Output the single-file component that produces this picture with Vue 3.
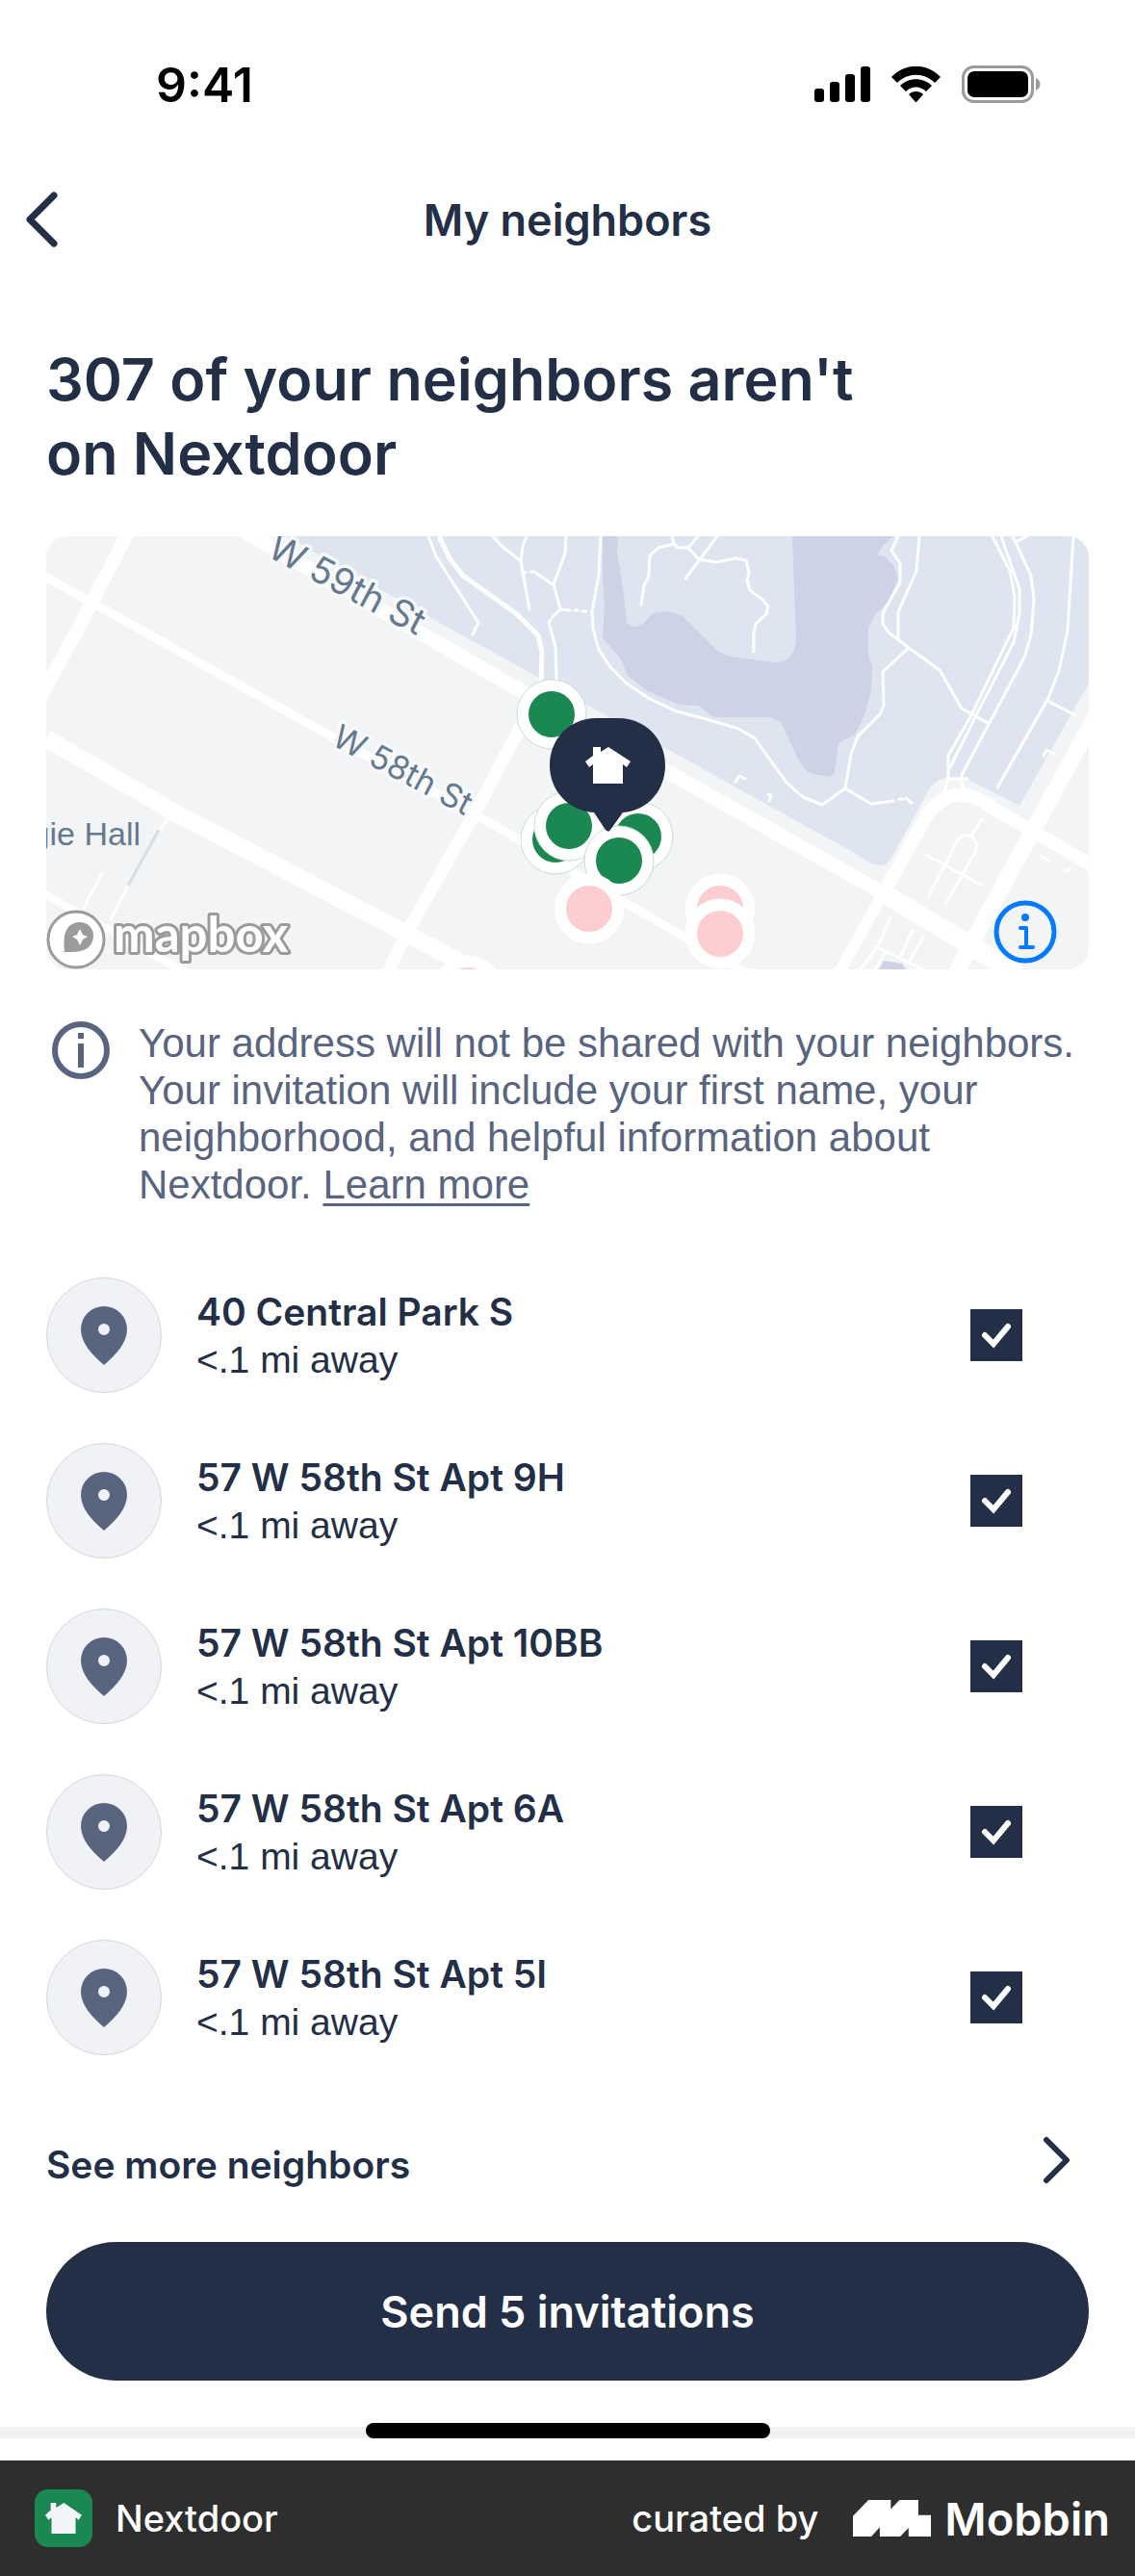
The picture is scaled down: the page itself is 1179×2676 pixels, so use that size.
<script setup>
import { computed, ref } from 'vue'

const neighbors = ref([
  { id: 1, address: '40 Central Park S', distance: '<.1 mi away', selected: true },
  { id: 2, address: '57 W 58th St Apt 9H', distance: '<.1 mi away', selected: true },
  { id: 3, address: '57 W 58th St Apt 10BB', distance: '<.1 mi away', selected: true },
  { id: 4, address: '57 W 58th St Apt 6A', distance: '<.1 mi away', selected: true },
  { id: 5, address: '57 W 58th St Apt 5I', distance: '<.1 mi away', selected: true },
])

const selectedCount = computed(() => neighbors.value.filter((n) => n.selected).length)

// Park footpaths, in map units
const footpaths = [
  '576,0 574,40 567,78 568,96 574,118 586,136 603,153 627,169 655,182 686,190 719,200 736,210 769,256 786,271 806,279 830,262 857,278 880,275',
  '886,273 890,273',
  '893,272 899,277',
  '830,262 836,226 843,208 866,185 870,176 869,141 896,116',
  '885,0 878,15 887,28 887,48 869,80 869,91 875,100 896,116 928,139 951,179 978,194',
  '907,0 904,36 885,79 885,108',
  '650,0 652,8 636,12 627,20 626,41 621,51 618,71',
  '652,8 656,12 667,12 677,0',
  '667,12 678,24 696,27 716,23 727,25 730,38 728,46 731,56 743,65 750,73 748,81 737,91 735,100 735,120',
  '697,0 664,44',
  '983,0 1001,36 1006,63 1005,95 961,186 937,228 937,251 931,273',
  '992,0 1011,55 1011,80 1005,110 964,190 939,240',
  '1004,0 1023,41 1026,65 1023,103 1016,126 951,248 952,260 955,268',
  '1007,6 1019,0',
  '1067,0 1061,98 1052,140 1040,170 988,261',
  '1040,171 1069,186',
  '1036,228 1039,222 1047,226',
  '716,255 720,249 726,252',
  '750,268 753,269 751,275',
  '936,252 957,252',
  '397,0 405,21 449,90 443,102',
  '464,0 473,10 493,26 496,43 502,76',
  '499,0 495,11 493,26',
  '540,0 539,18 527,50 534,76',
  '532,78 526,84',
  '524,87 522,90 529,115 530,150',
  '495,38 498,38',
  '503,37 507,37 527,51',
  '534,76 544,77',
  '549,77 552,77',
  '557,78 560,78',
]

const alleys = [
  '58,350 39,386',
  '131,290 117,305',
  '85,363 67,398',
  '877,396 864,426 846,450',
  '861,426 911,450',
  '900,410 888,435',
  '911,416 897,441',
  '871,433 861,450',
  '914,331 971,362',
  '917,373 939,331 946,316 952,311 961,311 967,320 965,328 934,382',
  '961,311 972,294',
  '1033,332 1041,337',
  '1057,347 1061,348 1063,345',
]

const markers = [
  { x: 525, y: 185, tone: 'joined' },
  { x: 529, y: 315, tone: 'joined' },
  { x: 543, y: 301, tone: 'joined' },
  { x: 615, y: 312, tone: 'joined' },
  { x: 595, y: 337, tone: 'joined' },
  { x: 564, y: 387, tone: 'invited' },
  { x: 700, y: 387, tone: 'invited' },
  { x: 700, y: 413, tone: 'invited' },
  { x: 438, y: 472, tone: 'invited' },
]
</script>

<template>
  <div class="page">
    <div class="status">
      <span class="clock">9:41</span>
      <div class="status-icons">
        <svg width="58" height="38" viewBox="0 0 58 38">
          <rect x="0" y="23" width="10" height="14" rx="3" />
          <rect x="16" y="16" width="10" height="21" rx="3" />
          <rect x="32" y="8" width="10" height="29" rx="3" />
          <rect x="48" y="0" width="10" height="37" rx="3" />
        </svg>
        <svg width="51" height="38" viewBox="0 0 51 38">
          <path d="M0 11 C14 -4 37 -4 51 11 L45 17 C34 6 17 6 6 17 Z" />
          <path d="M9 20 C18 11 33 11 42 20 L36 26 C30 20 21 20 15 26 Z" />
          <path d="M18 29 C22 25 29 25 33 29 L26 37 Q25.500 37.500 25 37 Z" />
        </svg>
        <svg width="82" height="40" viewBox="0 0 82 40">
          <rect x="1.500" y="1.500" width="72" height="36" rx="11" fill="none" stroke="#9a9a9a" stroke-width="3" />
          <rect x="6" y="6" width="63" height="27" rx="7" />
          <path d="M77 13 C83 16 83 23 77 26 Z" fill="#9a9a9a" />
        </svg>
      </div>
    </div>

    <header class="topbar">
      <button class="back" type="button" aria-label="Back">
        <svg width="34" height="58" viewBox="0 0 34 58">
          <path d="M30 4 L5 29 L30 54" fill="none" stroke="#232f46" stroke-width="7" stroke-linecap="round" stroke-linejoin="round" />
        </svg>
      </button>
      <div class="topbar-title">My neighbors</div>
    </header>

    <main class="content">
      <h1>307 of your neighbors aren't<br />on Nextdoor</h1>

      <div class="map">
        <svg class="map-canvas" viewBox="0 0 1083 450" role="img" aria-label="Map of nearby neighbors">
          <rect width="1083" height="450" fill="#f2f4f5" />
          <path fill="#dfe5f0" d="M249 0 L396 83 L510 146 L561 175 L643 220 L832 325 L855 339 Q870 346 877 336 L919 260 Q928 250 938 251 L957 253 L1011 280 L1083 153 V0 Z" />
          <path
            fill="#cdd2e4"
            fill-rule="evenodd"
            d="M578 0 L578 43 L580 73 L578 106 L596 126 L605 146 L625 161 L657 175 L678 176 L693 188 L753 188 L763 193 L782 233 Q790 247 798 247 L813 250 Q819 248 819 243 L823 215 L840 206 L850 186 L857 160 L858 136 L854 123 L854 96 L861 81 L875 68 L885 43 L880 30 L871 21 L863 20 L868 11 L880 0 Z
               M594 0 L593 16 L600 60 L603 90 Q610 98 621 90 L630 80 Q646 76 661 83 L689 111 Q700 122 711 125 L757 131 Q775 132 779 110 L775 0 Z"
          />
          <path fill="#cdd2e4" d="M865 450 L870 441 L889 444 L893 450 Z" />

          <g fill="none" stroke="#fff" stroke-linejoin="round">
            <polyline points="0,210 135,288 371,411 470,464" stroke-width="18" />
            <polyline points="-5,40 46,68 296,208 453,293 600,380 732,456" stroke-width="9" />
            <polyline points="200,-8 492,160 646,245 868,370" stroke-width="15" />
            <polyline points="868,370 957,423 1010,456" stroke-width="20" />
            <polyline points="87,-8 47,70 -6,168" stroke-width="14" />
            <polyline points="510,165 444,290 374,413 352,460" stroke-width="13" />
            <polyline points="-5,370 146,454" stroke-width="8" />
            <polyline points="1090,187 1025,306 961,423 940,464" stroke-width="17" />
            <path d="M868 373 L916 288 Q945 252 984 283 L1090 344" stroke-width="14" />
            <polyline points="870,370 820,460" stroke-width="12" />
            <polyline points="408,0 419,23 433,41 489,81 511,103 515,121 514,152" stroke-width="5" />
            <g stroke-width="3" stroke-linecap="round">
              <polyline v-for="p in footpaths" :key="p" :points="p" />
              <polyline v-for="p in alleys" :key="p" :points="p" />
            </g>
          </g>
          <path d="M117 305 L85 363" stroke="#dadddf" stroke-width="3" />

          <g class="street-names">
            <text transform="translate(228 20) rotate(28)" font-size="38">W 59th St</text>
            <text transform="translate(295 216) rotate(28)" font-size="34">W 58th St</text>
            <text class="place" x="98" y="321" font-size="34" text-anchor="end">gie Hall</text>
          </g>

          <g v-for="(m, i) in markers" :key="i">
            <circle :cx="m.x" :cy="m.y" r="36" fill="#fff" :stroke="m.tone === 'joined' ? '#c9ddd4' : '#fff'" stroke-width="1" />
            <circle :cx="m.x" :cy="m.y" r="24" :fill="m.tone === 'joined' ? '#1b8751' : '#fccdd1'" />
          </g>

          <path fill="#232f46" d="M572 189 H594 C623 189 643 211 643 238 C643 264 625 285 599 287 L586 305 Q584 308 581 305 L569 287 C542 285 523 264 523 238 C523 211 543 189 572 189 Z" />
          <path fill="#fff" d="M568 219 H576 V224 L584 219 L607 234 L603 240 L599 237 V257 H568 V237 L564 240 L560 234 L568 228 Z" />

          <circle cx="31" cy="419" r="29" fill="#fff" stroke="#9b9b9b" stroke-width="3" />
          <path fill="#9b9b9b" d="M19 432 C18 421 18 412 23 406 C29 400 39 399 45 405 C51 411 50 421 44 427 C38 432 29 432 19 432 Z" />
          <path fill="#fff" d="M35 408 L38 414 L43 416 L38 419 L35 425 L32 419 L27 416 L32 414 Z" />
          <text class="wordmark" x="70" y="432" font-size="51">mapbox</text>
        </svg>
        <button class="map-info" type="button" aria-label="About this map">
          <svg width="66" height="66" viewBox="0 0 66 66" fill="none" stroke="#047afe" stroke-linecap="round" stroke-linejoin="round">
            <circle cx="33" cy="33" r="30" stroke-width="5" />
            <circle cx="33" cy="18" r="4" fill="#047afe" stroke="none" />
            <path d="M28 29 H34 V49 M28 49 H41" stroke-width="4" />
          </svg>
        </button>
      </div>

      <section class="notice">
        <svg class="notice-icon" width="60" height="60" viewBox="0 0 60 60">
          <circle cx="30" cy="30" r="27" fill="none" stroke="#59657f" stroke-width="6" />
          <path d="M30 12 V18 M30 23 V48" stroke="#59657f" stroke-width="6" />
        </svg>
        <p>
          Your address will not be shared with your neighbors. Your invitation will include your first name, your
          neighborhood, and helpful information about Nextdoor. <a href="#">Learn more</a>
        </p>
      </section>

      <ul class="neighbors">
        <li v-for="n in neighbors" :key="n.id" class="neighbor">
          <span class="avatar">
            <svg width="48" height="61" viewBox="0 0 48 61">
              <path
                fill="#59657f"
                fill-rule="evenodd"
                d="M24 0 A24 24 0 0 1 48 24 C48 37 38 49 24 61 C10 49 0 37 0 24 A24 24 0 0 1 24 0 Z M24 18 A6 6 0 1 0 24 30 A6 6 0 1 0 24 18 Z"
              />
            </svg>
          </span>
          <label class="neighbor-text" :for="`neighbor-${n.id}`">
            <span class="address">{{ n.address }}</span>
            <span class="distance">{{ n.distance }}</span>
          </label>
          <span class="check">
            <input :id="`neighbor-${n.id}`" v-model="n.selected" type="checkbox" />
            <svg v-if="n.selected" width="54" height="54" viewBox="0 0 54 54">
              <path d="M15 27 L24 36 L39 18" fill="none" stroke="#fff" stroke-width="6" stroke-linecap="round" />
            </svg>
          </span>
        </li>
      </ul>

      <a class="see-more" href="#">
        <span>See more neighbors</span>
        <svg width="30" height="50" viewBox="0 0 30 50">
          <path d="M4 4 L25 25 L4 46" fill="none" stroke="#232f46" stroke-width="6" stroke-linecap="round" stroke-linejoin="round" />
        </svg>
      </a>

      <button class="send" type="button">Send {{ selectedCount }} invitations</button>
    </main>

    <div class="bottom-edge">
      <div class="home-indicator"></div>
    </div>

    <footer class="credit">
      <span class="app-icon">
        <svg width="38" height="32" viewBox="560 219 47 38" preserveAspectRatio="none">
          <path fill="#f3f4f7" d="M567 219 H574 V225 L584 219 L607 234 L603 240 L599 237 V257 H568 V237 L564 240 L560 234 L567 228 Z" />
        </svg>
      </span>
      <span class="app-name">Nextdoor</span>
      <span class="curated">curated by</span>
      <svg width="81" height="38" viewBox="0 0 241 113">
        <path fill="#fff" d="M0 50 L48 0 H117 V28 L144 0 H202 V47 H241 V113 H172 V86 L146 113 H83 V84 L57 113 H0 Z" />
      </svg>
      <span class="mobbin">Mobbin</span>
    </footer>
  </div>
</template>

<style>
body {
  margin: 0;
  background: #fff;
}
</style>

<style scoped>
.page {
  --ink: #232f46;
  --muted: #59657f;
  color: var(--ink);
  background: #fff;
  font-family: Inter, "Liberation Sans", sans-serif;
  font-weight: 600;
}

button {
  font: inherit;
  border: 0;
  padding: 0;
  background: none;
  cursor: pointer;
}

svg {
  display: block;
  flex: none;
}

.status {
  display: flex;
  justify-content: space-between;
  align-items: center;
  height: 176px;
  padding: 0 98px 0 162px;
  color: #000;
}

.clock {
  font-size: 50px;
  line-height: 60px;
}

.status-icons {
  display: flex;
  align-items: center;
  gap: 22px;
}

.topbar {
  display: grid;
  grid-template-columns: 96px 1fr 96px;
  align-items: center;
  height: 104px;
  font-size: 45px;
}

.back {
  padding-left: 26px;
  justify-self: start;
}

.topbar-title {
  text-align: center;
}

.content {
  padding: 76px 48px 44px;
}

h1 {
  margin: 0 0 47px;
  font-size: 61px;
  line-height: 77px;
  font-weight: 600;
}

.map {
  position: relative;
  border-radius: 22px;
  overflow: hidden;
}

.map-canvas {
  width: 100%;
  height: auto;
}

.street-names text {
  fill: #64798f;
  stroke: #f8f9fa;
  stroke-width: 7px;
  stroke-linejoin: round;
  paint-order: stroke;
  font-family: Inter, "Liberation Sans", sans-serif;
  font-weight: 400;
}

.street-names .place {
  font-family: "Liberation Sans", Arial, sans-serif;
  stroke: #f2f4f5;
}

.wordmark {
  fill: #fff;
  stroke: #9b9b9b;
  stroke-width: 6px;
  stroke-linejoin: round;
  paint-order: stroke;
  font-family: Lato, sans-serif;
  font-weight: 700;
}

.map-info {
  position: absolute;
  right: 33px;
  bottom: 6px;
}

.notice {
  display: flex;
  align-items: flex-start;
  gap: 30px;
  padding: 52px 0 0 6px;
  color: var(--muted);
}

.notice-icon {
  margin-top: 2px;
}

.notice p {
  margin: 0;
  font-family: "Liberation Sans", Arial, sans-serif;
  font-size: 42px;
  line-height: 49px;
  font-weight: 400;
}

.notice a {
  color: inherit;
  text-decoration-thickness: 3px;
  text-underline-offset: 5px;
}

.neighbors {
  list-style: none;
  margin: 72px 0 0;
  padding: 0;
  display: flex;
  flex-direction: column;
  gap: 52px;
}

.neighbor {
  display: flex;
  align-items: center;
  padding-right: 69px;
}

.avatar {
  box-sizing: border-box;
  display: grid;
  place-items: center;
  width: 120px;
  height: 120px;
  border: 1px solid #d3d7e0;
  border-radius: 50%;
  background: #f0f2f6;
}

.neighbor-text {
  flex: 1;
  display: flex;
  flex-direction: column;
  padding: 2px 0 0 36px;
  font-size: 39px;
  line-height: 50px;
}

.distance {
  font-family: "Liberation Sans", Arial, sans-serif;
  font-weight: 400;
}

.check {
  display: grid;
}

.check > * {
  grid-area: 1 / 1;
}

.check input {
  appearance: none;
  width: 54px;
  height: 54px;
  margin: 0;
  border: 4px solid var(--ink);
  background: #fff;
}

.check input:checked {
  background: var(--ink);
}

.check svg {
  pointer-events: none;
}

.see-more {
  display: flex;
  justify-content: space-between;
  align-items: flex-start;
  margin-top: 84px;
  padding-right: 18px;
  color: inherit;
  text-decoration: none;
  font-size: 39px;
  line-height: 60px;
}

.send {
  display: block;
  width: 100%;
  height: 144px;
  margin-top: 50px;
  border-radius: 72px;
  background: var(--ink);
  color: #fff;
  font-size: 45px;
}

.bottom-edge {
  display: flex;
  justify-content: center;
  align-items: flex-end;
  height: 16px;
  margin-bottom: 23px;
  background: linear-gradient(#fff 4px, #f0f2f4 4px);
}

.home-indicator {
  width: 420px;
  height: 16px;
  border-radius: 8px;
  background: #000;
}

.credit {
  display: flex;
  align-items: center;
  height: 120px;
  padding: 0 26px 0 36px;
  background: #2e2e2e;
  color: #fff;
  font-size: 38px;
  font-weight: 500;
}

.app-icon {
  display: grid;
  place-items: center;
  width: 60px;
  height: 60px;
  border-radius: 14px;
  background: #1b8751;
}

.app-name {
  flex: 1;
  padding-left: 24px;
}

.curated {
  padding-right: 36px;
}

.mobbin {
  padding-left: 14px;
  font-size: 47px;
  font-weight: 600;
}
</style>
